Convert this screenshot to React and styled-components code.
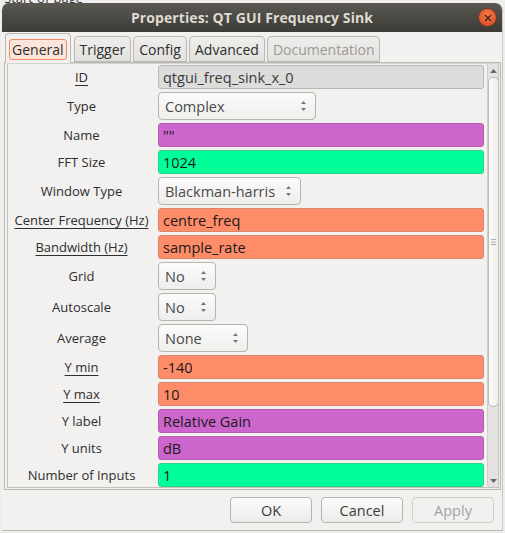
import React from 'react';
import styled, { createGlobalStyle } from 'styled-components';

const GlobalStyle = createGlobalStyle`
  html, body {
    margin: 0;
    padding: 0;
    background: #ecebe9;
  }
  * {
    box-sizing: border-box;
  }
`;

const Desktop = styled.div`
  position: relative;
  width: 505px;
  height: 533px;
  overflow: hidden;
  background: #efeeec;
  padding: 3px 3px 0 2px;
  font-family: 'Open Sans', 'Noto Sans', 'DejaVu Sans', sans-serif;
`;

const BehindText = styled.div`
  position: absolute;
  top: -11px;
  left: 4px;
  font-size: 13px;
  color: #333;
`;

const Window = styled.div`
  width: 500px;
  height: 528px;
  display: flex;
  flex-direction: column;
  border-radius: 7px 7px 0 0;
  overflow: hidden;
  background: #f2f1f0;
  border-bottom: 1px solid #bdbbb6;
  box-shadow: 1px 0 0 #c9c7c2;
`;

const TitleBar = styled.div`
  position: relative;
  height: 29px;
  flex: none;
  display: flex;
  align-items: center;
  justify-content: center;
  background: linear-gradient(#5a5851, #3c3b37);
  color: #dfdbd2;
  font-weight: 700;
  font-size: 14px;
  letter-spacing: 0.1px;
`;

const CloseButton = styled.div`
  position: absolute;
  right: 6px;
  top: 6px;
  width: 17px;
  height: 17px;
  border-radius: 50%;
  background: radial-gradient(circle at 50% 35%, #f47a4a, #d8471c);
  box-shadow: 0 0 0 1px #7a3a22;
  display: flex;
  align-items: center;
  justify-content: center;
`;

const Body = styled.div`
  flex: 1;
  display: flex;
  flex-direction: column;
  padding: 0 0 0 2px;
`;

const TabBar = styled.div`
  height: 30px;
  display: flex;
  align-items: flex-end;
  padding-left: 1px;
  gap: 2px;
  position: relative;
  z-index: 1;
`;

const Tab = styled.div`
  height: ${p => (p.$active ? '30px' : '26px')};
  margin-bottom: ${p => (p.$active ? '-1px' : '0')};
  padding: ${p => (p.$active ? '4px 3px 3px' : '0 5px')};
  display: flex;
  align-items: center;
  border: 1px solid #bab8b3;
  border-bottom: ${p => (p.$active ? 'none' : '1px solid #bab8b3')};
  border-radius: 4px 4px 0 0;
  background: ${p => (p.$active ? '#f2f1f0' : 'linear-gradient(#efeeec, #e2e1de)')};
  color: ${p => (p.$disabled ? '#9a9996' : '#2e2e2e')};
  font-size: 14px;
  margin-right: ${p => (p.$active ? '1px' : '0')};
`;

const FocusRing = styled.span`
  display: flex;
  align-items: center;
  height: 21px;
  padding: 0 2px;
  border: 1px solid #ef8a62;
  border-radius: 3px;
  background: #fbe5db;
`;

const Pane = styled.div`
  height: 428px;
  width: 497px;
  border: 1px solid #bab8b3;
  padding: 0 1px 1px 2px;
  overflow: hidden;
`;

const ScrollArea = styled.div`
  height: 100%;
  display: flex;
  border: 1px solid #c3c1bc;
  border-top-color: #d6d4cf;
  overflow: hidden;
`;

const Form = styled.div`
  flex: 1;
  display: flex;
  flex-direction: column;
  gap: 3px;
  padding: 1px 3px 0 0;
`;

const Row = styled.div`
  display: grid;
  grid-template-columns: 147px 1fr;
  column-gap: 3px;
  align-items: center;
  flex: none;
`;

const Label = styled.div`
  text-align: center;
  font-size: 13px;
  color: #2e2e2e;
  white-space: nowrap;
  text-decoration: ${p => (p.$underline ? 'underline' : 'none')};
  text-underline-offset: 3px;
`;

const LineEdit = styled.div`
  height: 24px;
  display: flex;
  align-items: center;
  padding: 0 4px;
  border: 1px solid ${p => p.$border};
  border-radius: 3px;
  background: ${p => p.$bg};
  font-size: 14.5px;
  color: ${p => (p.$readonly ? '#3a3a3a' : '#1a1a1a')};
  white-space: nowrap;
  overflow: hidden;
`;

const Combo = styled.div`
  width: ${p => p.$width}px;
  height: ${p => p.$height || 28}px;
  display: flex;
  align-items: center;
  justify-content: space-between;
  padding: 0 8px 0 6px;
  border: 1px solid #b6b4ae;
  border-radius: 4px;
  background: linear-gradient(#fbfbfb, #efeeec);
  font-size: 14.5px;
  color: #4a4a4a;
`;

const ScrollBar = styled.div`
  width: 11px;
  flex: none;
  display: flex;
  flex-direction: column;
  align-items: center;
  background: #e4e3e1;
  border-left: 1px solid #d0cec9;
  border-radius: 0 0 3px 3px;
`;

const ArrowCell = styled.div`
  height: 13px;
  flex: none;
  display: flex;
  align-items: center;
  justify-content: center;
`;

const Thumb = styled.div`
  width: 11px;
  height: 330px;
  flex: none;
  border: 1px solid #bcbab4;
  border-radius: 5px;
  background: linear-gradient(90deg, #fbfbfb, #efeeec);
  display: flex;
  align-items: center;
  justify-content: center;
`;

const Spacer = styled.div`
  flex: 1;
`;

const ButtonRow = styled.div`
  display: flex;
  justify-content: flex-end;
  gap: 9px;
  padding: 7px 8px 0 0;
`;

const Button = styled.div`
  width: 82px;
  height: 26px;
  display: flex;
  align-items: center;
  justify-content: center;
  border: 1px solid ${p => (p.$disabled ? '#d2d0cb' : '#b6b4ae')};
  border-radius: 4px;
  background: ${p => (p.$disabled ? '#f2f1f0' : 'linear-gradient(#fcfcfc, #ecebe9)')};
  color: ${p => (p.$disabled ? '#a3a29f' : '#3c3c3c')};
  font-size: 14.5px;
`;

const Spinner = () => (
  <svg width="7" height="12" viewBox="0 0 7 12">
    <path d="M3.5 1 L6 4 H1 Z" fill="#777" />
    <path d="M3.5 11 L6 8 H1 Z" fill="#777" />
  </svg>
);

const COLORS = {
  id: { bg: '#dcdcdb', border: '#b9b8b4' },
  str: { bg: '#cc66cc', border: '#b35cb3' },
  int: { bg: '#00ff99', border: '#33cc8c' },
  float: { bg: '#ff8c69', border: '#d8856a' },
};

const rows = [
  { label: 'ID', underline: true, kind: 'id', value: 'qtgui_freq_sink_x_0' },
  { label: 'Type', combo: 'Complex', width: 158 },
  { label: 'Name', kind: 'str', value: '""' },
  { label: 'FFT Size', kind: 'int', value: '1024' },
  { label: 'Window Type', combo: 'Blackman-harris', width: 143 },
  { label: 'Center Frequency (Hz)', underline: true, kind: 'float', value: 'centre_freq' },
  { label: 'Bandwidth (Hz)', underline: true, kind: 'float', value: 'sample_rate' },
  { label: 'Grid', combo: 'No', width: 58 },
  { label: 'Autoscale', combo: 'No', width: 58 },
  { label: 'Average', combo: 'None', width: 90 },
  { label: 'Y min', underline: true, kind: 'float', value: '-140' },
  { label: 'Y max', underline: true, kind: 'float', value: '10' },
  { label: 'Y label', kind: 'str', value: 'Relative Gain' },
  { label: 'Y units', kind: 'str', value: 'dB' },
  { label: 'Number of Inputs', kind: 'int', value: '1' },
];

const tabs = [
  { name: 'General', active: true },
  { name: 'Trigger' },
  { name: 'Config' },
  { name: 'Advanced' },
  { name: 'Documentation', disabled: true },
];

const App = () => {
  return (
    <>
      <GlobalStyle />
      <Desktop>
        <BehindText>Start-of-page</BehindText>
        <Window>
          <TitleBar>
            Properties: QT GUI Frequency Sink
            <CloseButton>
              <svg width="8" height="8" viewBox="0 0 8 8">
                <path d="M1 1 L7 7 M7 1 L1 7" stroke="#4a2418" strokeWidth="1.4" />
              </svg>
            </CloseButton>
          </TitleBar>
          <Body>
            <TabBar>
              {tabs.map(t => (
                <Tab key={t.name} $active={t.active} $disabled={t.disabled}>
                  {t.active ? <FocusRing>{t.name}</FocusRing> : t.name}
                </Tab>
              ))}
            </TabBar>
            <Pane>
              <ScrollArea>
                <Form>
                  {rows.map(r => (
                    <Row key={r.label}>
                      <Label $underline={r.underline}>{r.label}</Label>
                      {r.combo ? (
                        <Combo $width={r.width}>
                          <span>{r.combo}</span>
                          <Spinner />
                        </Combo>
                      ) : (
                        <LineEdit
                          $bg={COLORS[r.kind].bg}
                          $border={COLORS[r.kind].border}
                          $readonly={r.kind === 'id'}
                        >
                          {r.value}
                        </LineEdit>
                      )}
                    </Row>
                  ))}
                </Form>
                <ScrollBar>
                  <ArrowCell>
                    <svg width="7" height="4" viewBox="0 0 7 4">
                      <path d="M3.5 0 L7 4 H0 Z" fill="#6a6a6a" />
                    </svg>
                  </ArrowCell>
                  <Thumb>
                    <svg width="5" height="6" viewBox="0 0 5 6">
                      <path d="M0 0.5 H5 M0 3 H5 M0 5.5 H5" stroke="#b0aea8" strokeWidth="1" />
                    </svg>
                  </Thumb>
                  <Spacer />
                  <ArrowCell>
                    <svg width="7" height="4" viewBox="0 0 7 4">
                      <path d="M3.5 4 L7 0 H0 Z" fill="#6a6a6a" />
                    </svg>
                  </ArrowCell>
                </ScrollBar>
              </ScrollArea>
            </Pane>
            <ButtonRow>
              <Button>OK</Button>
              <Button>Cancel</Button>
              <Button $disabled>Apply</Button>
            </ButtonRow>
          </Body>
        </Window>
      </Desktop>
    </>
  );
};

export default App;
